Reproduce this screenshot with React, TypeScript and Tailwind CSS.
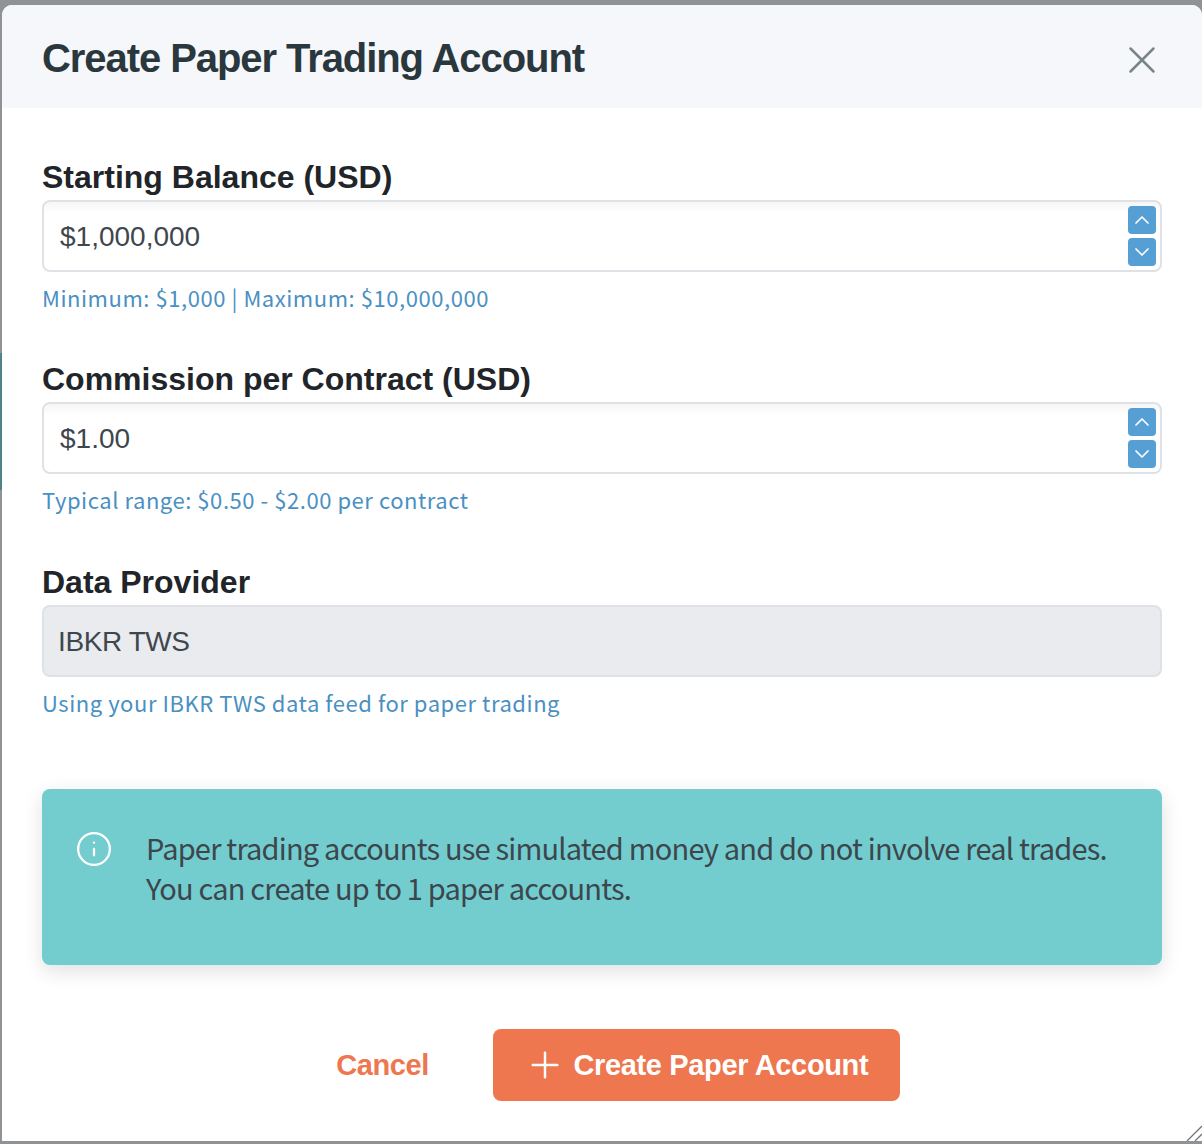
import React from 'react';
import { ChevronUp, ChevronDown, X, Info, Plus } from 'lucide-react';

const helpFont = "font-['Noto_Sans_CJK_SC','Noto_Sans',sans-serif]";
const mainFont = "font-['Liberation_Sans',Arial,sans-serif]";

function Stepper() {
	return (
		<div className="flex flex-col gap-[4px]">
			<button type="button" className="w-[28px] h-[28px] rounded-[4px] bg-[#559fd4] flex items-center justify-center text-white">
				<ChevronUp size={24} strokeWidth={1.75} />
			</button>
			<button type="button" className="w-[28px] h-[28px] rounded-[4px] bg-[#559fd4] flex items-center justify-center text-white">
				<ChevronDown size={24} strokeWidth={1.75} />
			</button>
		</div>
	);
}

function Field({ label, value, help, disabled, mb }: { label: string; value: string; help: string; disabled?: boolean; mb: string }) {
	return (
		<div className={mb}>
			<label className="block text-[32px] leading-[38px] font-bold text-[#212529] mb-[4px]">{label}</label>
			{disabled ? (
				<div className="h-[72px] rounded-[8px] border-2 border-[#dee2e6] bg-[#e9ebef] pl-[14px] pt-[2px] flex items-center text-[28px] tracking-[-0.4px] text-[#3f474e]">
					{value}
				</div>
			) : (
				<div className="h-[72px] rounded-[8px] border-2 border-[#dee2e6] bg-gradient-to-b from-[#f6f6f7] to-white to-[16%] pl-[16px] pr-[4px] flex items-center justify-between text-[28px] text-[#3f474e]">
					<span className="pt-[2px]">{value}</span>
					<Stepper />
				</div>
			)}
			<p className={`${helpFont} mt-[9px] text-[22px] leading-[32px] tracking-[0.55px] text-[#4a90c2]`}>{help}</p>
		</div>
	);
}

export default function App() {
	return (
		<div className={`${mainFont} h-[1144px] w-[1202px] bg-[#8f9396] pt-[5px] pb-[3px] flex overflow-hidden`}>
			<div className="w-[2px] shrink-0 flex flex-col">
				<div className="h-[348px] bg-[#8f9396]" />
				<div className="h-[137px] bg-[#4f8385]" />
				<div className="flex-1 bg-[#8f9396]" />
			</div>
			<div className="relative flex-1 bg-white rounded-tl-[10px] rounded-tr-[10px] flex flex-col">
				<div className="h-[103px] shrink-0 bg-[#f5f7fb] rounded-tl-[10px] rounded-tr-[10px] pt-[2px] pl-[40px] pr-[37px] flex items-center justify-between">
					<h2 className="text-[40px] font-bold text-[#2a373d] tracking-[-1.07px]">Create Paper Trading Account</h2>
					<X size={46} strokeWidth={1.3} className="text-[#7a8587] mt-[5px]" />
				</div>
				<div className="pt-[50px] pl-[40px] pr-[40px] flex-1 flex flex-col">
					<Field label="Starting Balance (USD)" value="$1,000,000" help="Minimum: $1,000 | Maximum: $10,000,000" mb="mb-[47px]" />
					<Field label="Commission per Contract (USD)" value="$1.00" help="Typical range: $0.50 - $2.00 per contract" mb="mb-[48px]" />
					<Field label="Data Provider" value="IBKR TWS" help="Using your IBKR TWS data feed for paper trading" disabled mb="mb-[71px]" />
					<div className="h-[176px] rounded-[8px] bg-[#73cdcf] shadow-[0_6px_20px_rgba(0,0,0,0.12)] pl-[34px] pt-[38px] flex">
						<Info size={38} strokeWidth={1.45} className="text-white shrink-0 mt-[3px] -ml-[1px]" />
						<p className={`${helpFont} ml-[33px] text-[29px] leading-[40px] tracking-[-0.8px] text-[#3c464c] whitespace-nowrap`}>
							Paper trading accounts use simulated money and do not involve real trades.
							<br />
							You can create up to 1 paper accounts.
						</p>
					</div>
					<div className="mt-[64px] pl-[32px] flex items-center justify-center gap-[64px]">
						<button type="button" className="pt-[2px] text-[29px] font-bold text-[#ee774f] tracking-[-0.4px]">Cancel</button>
						<button type="button" className="pt-[2px] h-[72px] w-[407px] rounded-[8px] bg-[#ee774f] text-white flex items-center justify-center gap-[7px] text-[29px] font-bold tracking-[-0.35px]">
							<Plus size={42} strokeWidth={1.4} className="-mt-[2px]" />
							Create Paper Account
						</button>
					</div>
				</div>
				<svg className="absolute right-0 bottom-0" width="16" height="16" viewBox="0 0 16 16" fill="none" stroke="#6f7476" strokeWidth="1.3">
					<path d="M1 16 L16 1" />
					<path d="M9 16 L16 9" />
				</svg>
			</div>
		</div>
	);
}
